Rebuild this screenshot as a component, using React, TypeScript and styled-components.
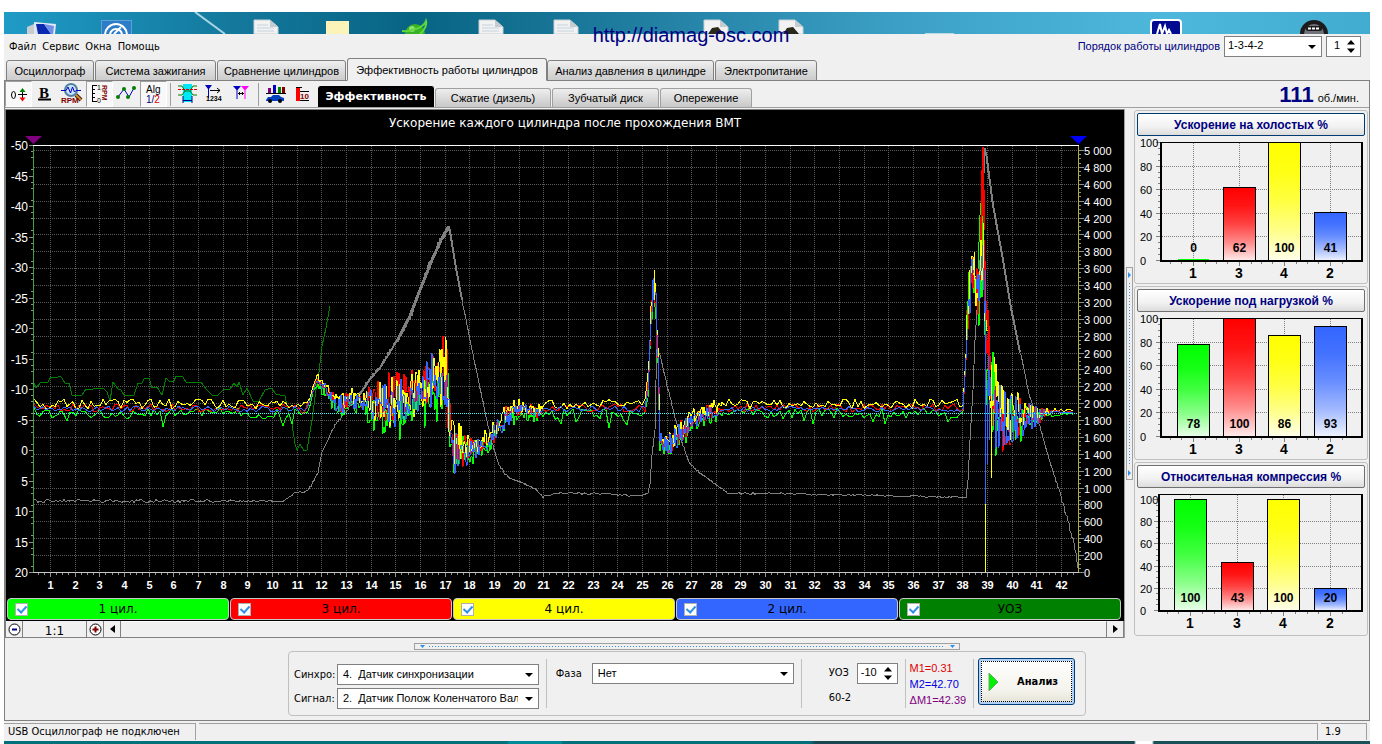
import React from "react";
import styled, { createGlobalStyle } from "styled-components";

const GlobalStyle = createGlobalStyle`
  * { box-sizing: border-box; }
  body {
    margin: 0;
    background: #ffffff;
    color: #000000;
    font-family: "Liberation Sans", Arial, sans-serif;
    font-size: 12px;
    line-height: 14px;
  }
  button, input, select { font: inherit; color: inherit; margin: 0; }
`;

const TAHOMA = `"DejaVu Sans Condensed", Tahoma, sans-serif`;
const VERDANA = `"DejaVu Sans", Verdana, sans-serif`;

const Page = styled.div`
  position: relative;
  padding: 12px 12px 0 4px;
`;

const Desktop = styled.svg`
  display: block;
  width: 100%;
  height: 22px;
`;

const Watermark = styled.a`
  position: absolute;
  top: 24px;
  left: 50%;
  transform: translateX(-50%);
  color: #000080;
  font-size: 20px;
  line-height: 22px;
  text-decoration: none;
`;

const AppWindow = styled.main`
  background: #f0f0f0;
`;

const TopRow = styled.div`
  display: flex;
  justify-content: space-between;
  align-items: center;
  height: 24px;
  padding: 0 9px 0 5px;
`;

const Menu = styled.nav`
  display: flex;
  gap: 6px;
  padding-top: 2px;
`;

const MenuItem = styled.button`
  padding: 0;
  border: 0;
  background: none;
  font-family: ${TAHOMA};
  font-size: 11px;
  line-height: 14px;
`;

const OrderGroup = styled.div`
  display: flex;
  align-items: center;
  gap: 4px;
`;

const OrderLabel = styled.label`
  color: #000080;
  font-size: 11px;
`;

const SelectBox = styled.span<{ $w: number }>`
  position: relative;
  display: block;
  width: ${(p) => p.$w}px;
`;

const NativeSelect = styled.select<{ $pad?: number }>`
  appearance: none;
  display: block;
  width: 100%;
  height: 21px;
  padding: 0 20px 2px ${(p) => p.$pad ?? 5}px;
  border: 1px solid #808080;
  border-radius: 0;
  background: #ffffff;
  font-size: 11px;
  line-height: 16px;
  overflow: hidden;
`;

const SelectArrow = styled.svg`
  position: absolute;
  right: 6px;
  top: 9px;
  width: 8px;
  height: 4px;
  pointer-events: none;
`;

const Spin = styled.span<{ $w: number }>`
  display: flex;
  width: ${(p) => p.$w}px;
  height: 21px;
  border: 1px solid #808080;
  background: #ffffff;
`;

const SpinInput = styled.input`
  flex: 1;
  min-width: 0;
  padding: 0 0 2px;
  border: 0;
  background: none;
  text-align: right;
  font-size: 11px;
`;

const SpinButtons = styled.span`
  display: flex;
  flex-direction: column;
  justify-content: center;
  gap: 3px;
  width: 20px;
  padding-left: 7px;
`;

const SpinButton = styled.button`
  display: block;
  width: 8px;
  height: 5px;
  padding: 0;
  border: 0;
  background: none;
  svg { display: block; }
`;

const MainTabs = styled.div`
  display: grid;
  grid-template-columns: 89px 122px 130px 200px 168px 103px;
  align-items: end;
  height: 23px;
  margin-bottom: -1px;
  padding-left: 2px;
`;

const MainTab = styled.button<{ $active?: boolean }>`
  position: relative;
  height: ${(p) => (p.$active ? 23 : 21)}px;
  margin: 0 ${(p) => (p.$active ? 0 : 1)}px 0 0;
  padding: 0;
  border: 1px solid #808080;
  border-bottom-color: ${(p) => (p.$active ? "#f0f0f0" : "#808080")};
  border-radius: 3px 3px 0 0;
  background: ${(p) => (p.$active ? "#f0f0f0" : "linear-gradient(#f0f0f0, #dcdcdc 50%, #cccccc)")};
  font-size: 11px;
  line-height: 16px;
  white-space: nowrap;
`;

const Frame = styled.section`
  border: 1px solid #808080;
`;

const Toolbar = styled.div`
  display: flex;
  align-items: flex-end;
  height: 27px;
  border-bottom: 1px solid #a0a0a0;
`;

const ToolButton = styled.button<{ $pressed?: boolean }>`
  width: 27px;
  height: 26px;
  padding: 0;
  border: 1px solid;
  border-color: ${(p) => (p.$pressed ? "#a0a0a0 #ffffff #ffffff #a0a0a0" : "transparent")};
  background: ${(p) => (p.$pressed ? "#f8f8f8" : "none")};
  svg { display: block; }
`;

const ToolDivider = styled.span`
  width: 1px;
  height: 23px;
  margin: 0 3px 1px;
  background: #a0a0a0;
`;

const SubTabs = styled.div`
  display: grid;
  grid-template-columns: 117px 117px 108px 93px;
  margin-left: 2px;
`;

const SubTab = styled.button<{ $active?: boolean }>`
  height: ${(p) => (p.$active ? 21 : 19)}px;
  align-self: end;
  margin-right: 1px;
  padding: 0;
  border: 1px solid ${(p) => (p.$active ? "#000000" : "#a0a0a0")};
  border-bottom: 0;
  border-radius: 3px 3px 0 0;
  background: ${(p) => (p.$active ? "#000000" : "linear-gradient(#eeeeee, #c8c8c8)")};
  color: ${(p) => (p.$active ? "#ffffff" : "#000000")};
  font-family: ${(p) => (p.$active ? VERDANA : "inherit")};
  font-size: 11px;
  font-weight: ${(p) => (p.$active ? 700 : 400)};
`;

const Rpm = styled.div`
  display: flex;
  align-items: baseline;
  gap: 4px;
  margin-left: auto;
  padding-right: 10px;
  font-size: 11px;
`;

const RpmValue = styled.strong`
  color: #000080;
  font-size: 22px;
  line-height: 25px;
`;

const Body = styled.div`
  display: flex;
  padding: 1px 1px 0 0;
`;

const ChartPanel = styled.div`
  flex: 1;
  min-width: 0;
  border: 1px solid #808080;
  border-right: 0;
  background: #000000;
`;

const PlotSvg = styled.svg`
  display: block;
  width: 100%;
  height: auto;
`;

const Legend = styled.div`
  display: flex;
  gap: 1px;
  padding: 1px 3px 1px 1px;
`;

const LegendItem = styled.label<{ $color: string }>`
  flex: 1;
  display: flex;
  align-items: center;
  height: 22px;
  padding: 0 7px;
  border: 1px solid #c8c8c8;
  border-radius: 4px;
  background: ${(p) => p.$color};
  font-family: ${VERDANA};
  font-size: 12px;
`;

const LegendCheck = styled.input`
  appearance: none;
  display: flex;
  align-items: center;
  justify-content: center;
  width: 13px;
  height: 13px;
  border: 1px solid #b0b0b0;
  background: #ffffff;
  &:checked::after {
    content: "";
    width: 4px;
    height: 7px;
    margin-bottom: 2px;
    border: solid #2f8fe8;
    border-width: 0 2px 2px 0;
    transform: rotate(42deg);
  }
`;

const LegendText = styled.span`
  flex: 1;
  padding-right: 13px;
  text-align: center;
`;

const ScrollRow = styled.div`
  display: flex;
  height: 16px;
  background: #f0f0f0;
`;

const ScrollButton = styled.button`
  display: flex;
  align-items: center;
  justify-content: center;
  width: 17px;
  padding: 0;
  border: 0;
  border-right: 1px solid #808080;
  background: none;
`;

const ZoomRatio = styled.output`
  width: 64px;
  border-right: 1px solid #808080;
  font-family: ${VERDANA};
  font-size: 12px;
  line-height: 20px;
  text-align: center;
`;

const ScrollTrack = styled.div`
  flex: 1;
  border-top: 1px solid #ffffff;
  border-right: 1px solid #808080;
`;

const VerticalRail = styled.div`
  display: flex;
  justify-content: center;
  align-items: flex-start;
  width: 10px;
  padding: 158px 1px 0 0;
  border-left: 1px solid #a0a0a0;
`;

const RailButton = styled.button`
  display: block;
  padding: 0;
  border: 0;
  background: none;
  svg { display: block; }
`;

const HorizontalRail = styled.div`
  display: flex;
  justify-content: center;
  padding-top: 5px;
`;

const Side = styled.aside`
  display: flex;
  flex-direction: column;
  gap: 2px;
  width: 234px;
  padding-top: 1px;
`;

const Group = styled.section`
  display: flex;
  flex-direction: column;
  gap: 1px;
  height: 174px;
  padding-top: 2px;
  border: 1px solid #c0c0c0;
  border-radius: 3px;
`;

const GroupButton = styled.button<{ $focused?: boolean }>`
  height: 23px;
  margin: 0 2px;
  padding: 0;
  border: 1px solid ${(p) => (p.$focused ? "#003c74" : "#707070")};
  border-radius: 2px;
  background: linear-gradient(#ffffff, #f2f2f2 60%, #dcdcdc);
  color: #000080;
  font-weight: 700;
  font-size: 12px;
`;

const Controls = styled.form`
  display: flex;
  justify-content: center;
  padding: 1px 0 4px;
`;

const ControlsBox = styled.div`
  display: flex;
  align-items: center;
  width: 798px;
  height: 65px;
  padding: 0 10px 0 5px;
  border: 1px solid #c0c0c0;
  border-radius: 4px;
`;

const Sources = styled.div`
  display: grid;
  grid-template-columns: 43px 202px;
  row-gap: 3px;
  align-items: center;
  padding-top: 6px;
`;

const FieldLabel = styled.label`
  font-family: ${TAHOMA};
  font-size: 11px;
`;

const ControlDivider = styled.span`
  width: 1px;
  height: 49px;
  margin: 0 4px 0 7px;
  background: #c0c0c0;
`;

const PhaseField = styled.div`
  display: grid;
  grid-template-columns: 36px 202px;
  align-items: center;
  align-self: flex-start;
  margin-left: 5px;
  padding-top: 11px;
`;

const AngleField = styled.div`
  display: grid;
  grid-template-columns: 28px 41px;
  row-gap: 7px;
  align-items: center;
  margin-left: 23px;
`;

const Markers = styled.div`
  width: 57px;
  white-space: nowrap;
  line-height: 16px;
  font-size: 11px;
`;

const Marker = styled.div<{ $color: string }>`
  color: ${(p) => p.$color};
`;

const AnalyzeButton = styled.button`
  flex: none;
  display: flex;
  align-items: center;
  gap: 18px;
  width: 97px;
  height: 47px;
  margin: 0 0 4px auto;
  padding: 0 0 0 9px;
  border: 1px solid #003c74;
  border-radius: 3px;
  outline: 1px dotted #000000;
  outline-offset: -4px;
  background: linear-gradient(#ffffff, #f4f3ec 70%, #e4e2d4);
  box-shadow: inset 0 0 0 2px #b0d0f8;
  font-family: ${TAHOMA};
  font-weight: 700;
  font-size: 11px;
`;

const StatusBar = styled.footer`
  display: flex;
  height: 20px;
  padding: 2px 0 1px;
  font-family: ${TAHOMA};
  font-size: 11px;
  line-height: 16px;
`;

const StatusCell = styled.div<{ $w?: number }>`
  ${(p) => (p.$w ? `width: ${p.$w}px;` : "flex: 1;")}
  margin-right: 3px;
  padding-left: 4px;
  border: solid #a0a0a0;
  border-width: 1px 1px 0 0;
`;

const Taskbar = styled.div`
  height: 4px;
  background: linear-gradient(
    90deg,
    #00707a 0 504px,
    #008a98 504px 558px,
    #00707a 558px 806px,
    #1a4850 812px 1130px,
    #ffffff 1132px 1148px,
    #1a5058 1150px
  );
`;

/* ---------- data ---------- */

type Pt = [number, number];
type Key = [number, number, number];

const GREEN = "#00ff00";
const RED = "#ff0000";
const YELLOW = "#ffff00";
const BLUE = "#3366ff";

const makeRandom = (seed: number) => {
  let s = seed;
  return () => {
    s = (s * 16807) % 2147483647;
    return s / 2147483647;
  };
};

const toPoints = (pts: Pt[]) => pts.map(([x, y]) => `${x},${Math.round(y * 10) / 10}`).join(" ");

const sample = (keys: Key[], x: number): Pt => {
  for (let i = 1; i < keys.length; i++) {
    const a = keys[i - 1];
    const b = keys[i];
    if (x <= b[0]) {
      const t = (x - a[0]) / (b[0] - a[0]);
      return [a[1] + (b[1] - a[1]) * t, a[2] + (b[2] - a[2]) * t];
    }
  }
  const last = keys[keys.length - 1];
  return [last[1], last[2]];
};

/* x, centre, spread of the four cylinder traces */
const envelope: Key[] = [
  [34, 408, 0], [297, 408, 0], [305, 411, 1], [311, 398, 3], [315, 382, 3], [318, 379, 4], [323, 386, 6],
  [330, 395, 6], [335, 401, 7], [342, 404, 9], [350, 400, 7], [365, 402, 7], [372, 404, 16], [385, 405, 24],
  [398, 403, 22], [408, 399, 18], [418, 394, 22], [428, 386, 24], [440, 380, 30], [446, 378, 34], [448, 395, 30],
  [450, 430, 24], [453, 450, 22], [458, 448, 20], [466, 450, 15], [478, 446, 9], [488, 442, 7], [495, 432, 9],
  [505, 418, 10], [512, 412, 8], [520, 410, 6], [540, 411, 6], [545, 408, 0], [645, 408, 0], [648, 385, 8],
  [650, 340, 10], [652, 300, 14], [654, 285, 14], [656, 305, 14], [658, 360, 18], [660, 440, 8], [668, 444, 10],
  [680, 434, 11], [690, 422, 9], [700, 414, 7], [715, 411, 7], [728, 408, 0], [963, 408, 0], [965, 380, 8],
  [967, 320, 20], [969, 292, 26], [973, 270, 18], [976, 285, 22], [979, 285, 34], [982, 255, 34], [984, 260, 24],
  [986, 340, 55], [988, 370, 56], [990, 390, 50], [993, 402, 48], [997, 416, 36], [1003, 420, 28],
  [1015, 418, 22], [1028, 416, 13], [1040, 415, 7], [1055, 412, 2], [1072, 412, 1],
];

type TraceSpec = { seed: number; offset: number; calm: number; dips?: boolean; lean: number };

const buildTrace = ({ seed, offset, calm, dips, lean }: TraceSpec) => {
  const rnd = makeRandom(seed);
  const pts: Pt[] = [];
  let x = 34;
  while (x <= 1073) {
    const [c, amp] = sample(envelope, x);
    const late = x > 1035;
    const r = rnd() * 2 - 1;
    const noise = amp > 1 ? Math.sign(r) * Math.pow(Math.abs(r), 1.5) * 1.15 * amp : r * (late ? 1 : calm);
    const bias = x > 366 && x < 448 ? lean * amp * 0.4 : 0;
    let y = c + bias + offset * (late ? 0.4 : 1) + noise;
    if (dips && amp < 1 && rnd() < 0.12) y += 4 + rnd() * 9;
    pts.push([x, y]);
    x += amp > 3 ? 1 : 3;
  }
  return toPoints(pts);
};

const traces = [
  { color: GREEN, points: buildTrace({ seed: 71, offset: 5, calm: 5, dips: true, lean: 1 }) },
  { color: RED, points: buildTrace({ seed: 1303, offset: 0, calm: 4, lean: -1 }) },
  { color: YELLOW, points: buildTrace({ seed: 991, offset: -4, calm: 5, lean: 0.3 }) },
  { color: BLUE, points: buildTrace({ seed: 4217, offset: 1, calm: 3, lean: -0.3 }) },
];

const advance: Pt[] = [
  [34, 383], [36, 388], [41, 382], [48, 382], [51, 377], [58, 377], [60, 376], [62, 378], [65, 383], [69, 383],
  [72, 395], [82, 395], [86, 389], [93, 389], [96, 388], [103, 388], [107, 392], [110, 401], [113, 382],
  [118, 389], [121, 390], [124, 395], [134, 395], [138, 383], [142, 383], [144, 379], [149, 378], [152, 388],
  [157, 387], [162, 395], [166, 378], [169, 381], [174, 381], [176, 376], [183, 377], [186, 382], [201, 382],
  [206, 389], [212, 395], [218, 395], [224, 389], [230, 389], [234, 383], [237, 387], [239, 382], [243, 395],
  [247, 388], [253, 401], [259, 401], [265, 390], [271, 388], [276, 394], [280, 395], [285, 396], [288, 411],
  [292, 424], [295, 444], [297, 450], [300, 444], [304, 451], [307, 450], [312, 420], [316, 390], [319, 372],
  [322, 346], [326, 328], [330, 306],
];

const speedKeys: Key[] = [
  [34, 501, 2], [284, 501, 1], [290, 496, 1], [297, 492, 1], [308, 491, 1], [312, 484, 1], [318, 472, 1],
  [322, 452, 0], [328, 440, 1], [335, 425, 1], [345, 413, 1], [358, 396, 1], [370, 378, 2], [380, 367, 2],
  [398, 339, 3], [410, 318, 3], [420, 290, 4], [432, 258, 5], [442, 238, 5], [449, 228, 3], [451, 235, 2],
  [456, 268, 1], [462, 300, 1], [470, 340, 1], [478, 378, 1], [486, 417, 1], [493, 446, 1], [498, 463, 1],
  [505, 474, 1], [511, 479, 1], [525, 484, 1], [535, 489, 1], [543, 497, 1], [560, 493, 1], [600, 494, 1],
  [640, 496, 1], [648, 493, 0], [650, 484, 0], [652, 455, 0], [655, 430, 0], [656, 380, 0], [657, 350, 0],
  [660, 355, 0], [667, 385, 1], [675, 417, 1], [682, 443, 1], [690, 464, 1], [700, 473, 1], [715, 484, 1],
  [728, 493, 1], [800, 494, 1], [900, 496, 1], [960, 497, 1], [966, 498, 0], [968, 480, 0], [970, 440, 0],
  [973, 390, 0], [975, 340, 0], [977, 310, 0], [979, 280, 0], [981, 240, 0], [983, 200, 0], [985, 148, 0],
  [987, 160, 6], [993, 205, 4], [1003, 260, 3], [1011, 308, 3], [1020, 352, 2], [1030, 398, 1],
  [1040, 427, 1], [1050, 462, 1], [1060, 493, 1], [1066, 515, 3], [1075, 548, 3], [1078, 568, 1],
];

const speedTrace = (() => {
  const rnd = makeRandom(557);
  const pts: Pt[] = [];
  for (let x = 34; x <= 1078; x += x < 310 || (x > 543 && x < 640) || (x > 728 && x < 960) ? 2 : 1) {
    const [c, amp] = sample(speedKeys, x);
    pts.push([x, c + (rnd() * 2 - 1) * amp]);
  }
  return toPoints(pts);
})();

const legend = [
  { label: "1 цил.", color: GREEN },
  { label: "3 цил.", color: RED },
  { label: "4 цил.", color: YELLOW },
  { label: "2 цил.", color: BLUE },
  { label: "УОЗ", color: "#008000" },
];

const range = (n: number) => Array.from({ length: n }, (_, i) => i);

/* ---------- charts ---------- */

const AXIS_FONT = "Liberation Sans, Arial, sans-serif";

const MainPlot = () => {
  const xAt = (v: number) => Math.round(50 + (v - 1) * 24.66) + 0.5;
  const leftAt = (v: number) => Math.round(145 + (v + 50) * 6.1) + 0.5;
  const rightAt = (v: number) => Math.round(572 - v * 0.0844) + 0.5;
  return (
    <PlotSvg viewBox="6 110 1118 487" role="img" aria-label="Ускорение каждого цилиндра после прохождения ВМТ">
      <text x="565" y="127" fill="#fff" fontSize="12" fontFamily="DejaVu Sans, Verdana, sans-serif" textAnchor="middle">
        Ускорение каждого цилиндра после прохождения ВМТ
      </text>
      <g stroke="#5a5a5a" strokeDasharray="1 1">
        {range(42).map((i) => (
          <line key={i} x1={xAt(i + 1)} x2={xAt(i + 1)} y1="146" y2="572" />
        ))}
        {range(25).map((i) => (
          <line key={i} x1="34" x2="1078" y1={rightAt((i + 1) * 200)} y2={rightAt((i + 1) * 200)} />
        ))}
      </g>
      <g stroke="#909090">
        {range(71)
          .filter((i) => i % 5 !== 3)
          .map((i) => (
            <line key={i} x1={i % 5 ? 31 : 29} x2="33" y1={leftAt(i - 50)} y2={leftAt(i - 50)} />
          ))}
        {range(101).map((i) => (
          <line key={i} x1="1079" x2={i % 4 ? 1081 : 1084} y1={rightAt(i * 50)} y2={rightAt(i * 50)} />
        ))}
        {range(169).map((i) => {
          const v = 0.5 + i * 0.25;
          return <line key={i} x1={xAt(v)} x2={xAt(v)} y1="573" y2={Number.isInteger(v) ? 577 : 575} />;
        })}
      </g>
      <g fill="#fff" fontFamily={AXIS_FONT} fontSize="11">
        {range(15).map((i) => (
          <text key={i} x="28" y={leftAt(i * 5 - 50) + 4} textAnchor="end" fontSize="12">
            {i * 5 - 50}
          </text>
        ))}
        {range(26).map((i) => (
          <text key={i} x="1084" y={rightAt(i * 200) + 4}>
            {String(i * 200).replace(/(\d)(\d{3})$/, "$1 $2")}
          </text>
        ))}
      </g>
      <g fill="#fff" fontFamily={AXIS_FONT} fontSize="11" fontWeight="700" textAnchor="middle">
        {range(42).map((i) => (
          <text key={i} x={xAt(i + 1)} y="589">
            {i + 1}
          </text>
        ))}
      </g>
      <g fill="none" shapeRendering="crispEdges">
        <polyline points={toPoints(advance)} stroke="#008000" />
        <polyline points={speedTrace} stroke="#808080" />
        <polyline points="358,397 370,379 380,368 398,339" stroke="#808080" strokeWidth="2" />
        <polyline points="398,339 410,316 420,290 432,260 442,238 449,226" stroke="#808080" strokeWidth="3" />
        <polyline points="449,226 456,268 462,300" stroke="#808080" strokeWidth="2" />
        <polyline points="986,152 993,205 1003,260 1011,308 1020,352" stroke="#808080" strokeWidth="2" />
        {traces.map((t) => (
          <polyline key={t.color} points={t.points} stroke={t.color} />
        ))}
        <path d="M967 330 L969 272 M978 270 L980 215 L982 192 L983 260 M993 352 V400 M992 395 L993 352 L995 390" stroke={GREEN} />
        <path d="M981 240 L983 147 L984 230 M984 240 L986 320 M988 310 L990 370" stroke={RED} strokeWidth="2" />
        <path d="M445.500 380 V337 M654.500 300 V270 M974.500 252 V280 M984 285 L983 222 M991.500 365 V478 M985.500 504 V572" stroke={YELLOW} />
        <path d="M982 245 L984 290 M653 300 V278 M985.500 270 V504 M987.500 380 V464 M989.500 400 V440" stroke={BLUE} />
        <line x1="34" x2="1078" y1="413.5" y2="413.5" stroke="#40ffff" strokeDasharray="1 1" />
        <line x1="33" x2="1079" y1="145.5" y2="145.5" stroke="#fff" />
        <line x1="33" x2="1079" y1="572.5" y2="572.5" stroke="#c8c8c8" />
        <line x1="33.5" x2="33.5" y1="146" y2="572" stroke="#40a040" />
        <line x1="1078.5" x2="1078.5" y1="146" y2="572" stroke="#b0b030" />
      </g>
      <polygon points="25,136 42,136 33.5,144" fill="#800080" />
      <polygon points="1070,136 1087,136 1078.5,144" fill="#0000ff" />
    </PlotSvg>
  );
};

type BarPlotProps = { id: string; values: number[]; top: number; bottom: number; left: number; centers: number[] };

const barNames = ["1", "3", "4", "2"];
const barColors = [GREEN, RED, YELLOW, BLUE];

const BarPlot = ({ id, values, top, bottom, left, centers }: BarPlotProps) => {
  const yAt = (v: number) => Math.round(bottom - ((bottom - top) * v) / 100) + 0.5;
  return (
    <PlotSvg viewBox="0 0 232 145" role="img" aria-label={values.join(", ")}>
      <defs>
        {barColors.map((c, i) => (
          <linearGradient key={c} id={`${id}-${i}`} x1="0" y1="0" x2="0" y2="1">
            <stop offset="0" stopColor={c} />
            <stop offset="0.25" stopColor={c} stopOpacity="0.92" />
            <stop offset="0.5" stopColor={c} stopOpacity="0.74" />
            <stop offset="0.75" stopColor={c} stopOpacity="0.46" />
            <stop offset="1" stopColor={c} stopOpacity="0.08" />
          </linearGradient>
        ))}
      </defs>
      <g stroke="#808080" shapeRendering="crispEdges">
        <g strokeDasharray="1 1">
          {[20, 40, 60, 80].map((v) => (
            <line key={v} x1={left} x2="227" y1={yAt(v)} y2={yAt(v)} />
          ))}
          {centers.map((c) => (
            <line key={c} x1={c + 0.5} x2={c + 0.5} y1="6" y2={bottom} />
          ))}
        </g>
        {range(21).map((i) => (
          <line key={i} x1={left - (i % 4 ? 2 : 4)} x2={left} y1={yAt(i * 5)} y2={yAt(i * 5)} />
        ))}
        {centers.map((c) => (
          <path key={c} d={`M${c + 0.5} ${bottom + 1}v5M${c - 11.5} ${bottom + 1}v3M${c + 12.5} ${bottom + 1}v3M${c - 22.5} ${bottom + 1}v3`} />
        ))}
      </g>
      <path d={`M${left} 5.500H228`} stroke="#000" fill="none" />
      <path d={`M${left + 1} 5V${bottom + 1}H227V5`} stroke="#000" strokeWidth="2" fill="none" />
      {values.map((v, i) =>
        v > 0 ? (
          <g key={i}>
            <rect x={centers[i] - 15.5} y={yAt(v)} width="32" height={bottom + 0.5 - yAt(v)} fill="#fff" />
            <rect x={centers[i] - 15.5} y={yAt(v)} width="32" height={bottom + 0.5 - yAt(v)} fill={`url(#${id}-${i})`} stroke="#000" />
          </g>
        ) : (
          <rect key={i} x={centers[i] - 15} y={bottom - 1} width="31" height="1" fill={barColors[i]} />
        )
      )}
      <g fontFamily={AXIS_FONT} fontSize="12" fontWeight="700" textAnchor="middle">
        {values.map((v, i) => (
          <text key={i} x={centers[i] + 0.5} y={bottom - 8}>
            {v}
          </text>
        ))}
      </g>
      <g fontFamily={AXIS_FONT} fontSize="14" fontWeight="700" textAnchor="middle">
        {barNames.map((n, i) => (
          <text key={n} x={centers[i]} y={bottom + 18}>
            {n}
          </text>
        ))}
      </g>
      <g fontFamily={AXIS_FONT} fontSize="11">
        {[0, 20, 40, 60, 80, 100].map((v) => (
          <text key={v} x="5" y={yAt(v) + 4}>
            {v}
          </text>
        ))}
      </g>
    </PlotSvg>
  );
};

/* ---------- small pieces ---------- */

const Down = () => (
  <SelectArrow viewBox="0 0 8 4">
    <path d="M0 0H8L4 4Z" fill="#000" />
  </SelectArrow>
);

const Select = ({ id, w, value, pad }: { id: string; w: number; value: string; pad?: number }) => (
  <SelectBox $w={w}>
    <NativeSelect id={id} $pad={pad} defaultValue={value}>
      <option>{value}</option>
    </NativeSelect>
    <Down />
  </SelectBox>
);

const Spinner = ({ id, w, value, label }: { id?: string; w: number; value: string; label: string }) => (
  <Spin $w={w}>
    <SpinInput id={id} aria-label={label} defaultValue={value} />
    <SpinButtons>
      <SpinButton type="button" aria-label="Больше">
        <svg width="8" height="5"><path d="M4 0L8 4.500H0Z" /></svg>
      </SpinButton>
      <SpinButton type="button" aria-label="Меньше">
        <svg width="8" height="5"><path d="M4 5L8 .5H0Z" /></svg>
      </SpinButton>
    </SpinButtons>
  </Spin>
);

const Icon = ({ children }: { children: React.ReactNode }) => (
  <svg width="25" height="24" viewBox="0 0 25 24" fill="none" fontFamily="Liberation Sans, Arial, sans-serif">
    {children}
  </svg>
);

const leftTools = [
  {
    name: "Смещение",
    pressed: true,
    icon: (
      <>
        <ellipse cx="7.500" cy="13" rx="2" ry="3.500" stroke="#000" />
        <path d="M12 12.500H21M16.500 8V18" stroke="#000" />
        <path d="M13.500 10L16.500 6L19.500 10Z" fill="#008000" />
        <path d="M13.500 15.500H19.500L16.500 19.500Z" fill="#f00" />
      </>
    ),
  },
  {
    name: "Жирный",
    pressed: false,
    icon: (
      <>
        <text x="6" y="16" fontFamily="Liberation Serif, serif" fontSize="15" fontWeight="700" fill="#000">B</text>
        <path d="M5 17.500H18" stroke="#000" strokeWidth="2" />
      </>
    ),
  },
  {
    name: "Обороты",
    pressed: false,
    icon: (
      <>
        <path d="M16 13L21 18" stroke="#402810" strokeWidth="4" />
        <path d="M16 13L21 18" stroke="#d08828" strokeWidth="2" />
        <circle cx="11" cy="8" r="6" fill="#c8e4ff" stroke="#5080a0" strokeWidth="2" />
        <path d="M1 8.500H6L8 5L10.500 11L12.500 5L14.500 10L16 8.500H21" stroke="#0000c0" />
        <text x="1" y="21" fontSize="8" fontWeight="700" fill="#800000">RPM</text>
      </>
    ),
  },
  {
    name: "Шкала оборотов",
    pressed: true,
    icon: (
      <>
        <path d="M5 3.500H10M5.500 3V20M5 19.500H10M5 7.500H8M5 11.500H8M5 15.500H8" stroke="#000" />
        <text x="10" y="8" fontSize="7" fill="#000">1</text>
        <text x="10" y="21" fontSize="7" fill="#000">0</text>
        <text transform="translate(15 3) rotate(90)" fontSize="7" fontWeight="700" fill="#800000">RPM</text>
      </>
    ),
  },
  {
    name: "Точки",
    pressed: false,
    icon: (
      <>
        <path d="M4 15L10 7L15 15L20 6" stroke="#0000c0" />
        <g fill="#008000">
          <circle cx="4" cy="15" r="2" /><circle cx="10" cy="7" r="2" /><circle cx="14" cy="15" r="2" /><circle cx="20" cy="6" r="2" />
        </g>
      </>
    ),
  },
  {
    name: "Алгоритм",
    pressed: true,
    icon: (
      <>
        <text x="5" y="11" fontSize="10" fill="#000">Alg</text>
        <text x="5" y="21" fontSize="10" fill="#000080">1/<tspan fill="#e00000">2</tspan></text>
      </>
    ),
  },
];

const midTools = [
  {
    name: "Цилиндр",
    icon: (
      <>
        <path d="M8 2H17V20H8Z" fill="#00e8f8" />
        <path d="M3 4H7L10 9H15L18 4H22M3 13H7L10 9M15 9L18 13H22" stroke="#008000" />
        <path d="M3 7.500H22" stroke="#e00000" strokeDasharray="3 1" />
        <path d="M8 14V21M17 14V21M8 18.500H17" stroke="#000080" />
      </>
    ),
  },
  {
    name: "Метки 1234",
    icon: (
      <>
        <path d="M3 3H10L7 7V16H6V7Z" fill="#0000c0" />
        <path d="M8 8.500H18M15 6L18 8.500L15 11" stroke="#000" />
        <text x="4" y="19" fontSize="7" fontWeight="700" fill="#000">1234</text>
      </>
    ),
  },
  {
    name: "Между метками",
    icon: (
      <>
        <path d="M4 4H12L8.500 8V17H7.500V8Z" fill="#0000c0" />
        <path d="M12 4H20L16.500 8V17H15.500V8Z" fill="#f0f" />
        <path d="M9 11.500H15M10.500 10V13M13.500 10V13" stroke="#000" />
      </>
    ),
  },
];

const rightTools = [
  {
    name: "Гистограмма",
    icon: (
      <>
        <path d="M5 6H8V11H5Z" fill="#800080" /><path d="M10 3H13V11H10Z" fill="#0000c0" />
        <path d="M15 5H18V11H15Z" fill="#008000" /><path d="M19 5H22V11H19Z" fill="#800000" />
        <path d="M3 11.500H23" stroke="#000" />
        <path d="M3 18L5 15H8L10 13H16L18 15L21 16V19H3Z" fill="#0040c0" />
        <circle cx="7" cy="19" r="2" fill="#000" /><circle cx="17" cy="19" r="2" fill="#000" />
      </>
    ),
  },
  {
    name: "Десять",
    icon: (
      <>
        <path d="M6 6H10V19H6Z" fill="#f00" />
        <path d="M6 5.500H12M10 9.500H19M10 18.500H19" stroke="#000" />
        <text x="10" y="17" fontSize="8" fontWeight="700" fill="#800000">10</text>
      </>
    ),
  },
];

const mainTabs = [
  "Осциллограф",
  "Система зажигания",
  "Сравнение цилиндров",
  "Эффективность работы цилиндров",
  "Анализ давления в цилиндре",
  "Электропитание",
];

const sideCharts = [
  { title: "Ускорение на холостых %", values: [0, 62, 100, 41], top: 5, bottom: 123, left: 25, centers: [58, 104, 149, 195] },
  { title: "Ускорение под нагрузкой %", values: [78, 100, 86, 93], top: 5, bottom: 123, left: 25, centers: [58, 104, 149, 195] },
  { title: "Относительная компрессия %", values: [100, 43, 100, 20], top: 10, bottom: 121, left: 23, centers: [55, 102, 148, 195] },
];

const Sheet = ({ x, car }: { x: number; car?: boolean }) => (
  <g transform={`translate(${x} 8)`}>
    <path d="M0 0H16L24 7V14H0Z" fill="#f2f2f2" stroke="#c8d0d4" />
    <path d="M16 0V7H24Z" fill="#c4ccd0" />
    {car ? <path d="M4 14L8 8L14 7L20 14Z" fill="#28281c" /> : <path d="M3 5H14M3 8H20M3 11H20" stroke="#c4d4e0" />}
  </g>
);

const DesktopStrip = () => (
  <Desktop viewBox="0 0 1366 22" preserveAspectRatio="xMinYMin slice" aria-hidden="true">
    <defs>
      <linearGradient id="sky">
        <stop offset="0" stopColor="#1e9bc6" />
        <stop offset="0.16" stopColor="#147a9e" />
        <stop offset="0.3" stopColor="#086484" />
        <stop offset="0.45" stopColor="#1e7c9e" />
        <stop offset="0.67" stopColor="#3ea2c8" />
        <stop offset="0.85" stopColor="#4eb8dc" />
        <stop offset="1" stopColor="#42acd0" />
      </linearGradient>
    </defs>
    <rect width="1366" height="22" fill="url(#sky)" />
    <path d="M191 0L221 22" stroke="#a8d4e4" strokeWidth="2" />
    <path d="M23 15L30 12V22H23Z" fill="#c8ccd0" />
    <path d="M30 10L52 12L51 22H30Z" fill="#e0e8f4" />
    <path d="M32 12L40 12L47 22H34Z" fill="#0a28b0" />
    <path d="M40 12L50 14L49 22H47Z" fill="#7090e8" />
    <rect x="97.500" y="8.500" width="30" height="15" fill="#2c7cc8" stroke="#5ea0d8" />
    <circle cx="112" cy="23" r="11" fill="none" stroke="#fff" strokeWidth="2" />
    <circle cx="112" cy="23" r="6" fill="none" stroke="#fff" strokeWidth="2" />
    <path d="M110 22L117 15" stroke="#fff" strokeWidth="2" />
    <Sheet x={250} />
    <rect x="322" y="9" width="23" height="14" fill="#fbf3b8" />
    <circle cx="411" cy="22" r="10" fill="#38b028" />
    <circle cx="408" cy="17" r="3" fill="#90e070" />
    <path d="M398 19C408 20 420 15 422 9C423 12 421 18 416 22" fill="none" stroke="#60d838" strokeWidth="2" />
    <Sheet x={475} />
    <Sheet x={550} />
    <Sheet x={700} car />
    <Sheet x={775} car />
    <path d="M921 21.500H950" stroke="#b8d8e4" />
    <rect x="1147" y="8" width="30" height="18" rx="3" fill="#000a90" stroke="#fff" strokeWidth="2" />
    <path d="M1153 22L1156 12L1158 22L1161 14L1163 22L1165 18L1167 22" stroke="#fff" strokeWidth="2" fill="none" />
    <circle cx="1310" cy="22" r="12" fill="#707478" stroke="#1c1c1c" strokeWidth="4" />
    <rect x="1302" y="14" width="16" height="5" rx="2" fill="#1c1c1c" />
    <path d="M1304 16.500H1316" stroke="#fff" strokeWidth="2" strokeDasharray="3 1" />
  </Desktop>
);

const tools = (list: { name: string; pressed?: boolean; icon: React.ReactNode }[]) =>
  list.map((t) => (
    <ToolButton key={t.name} type="button" aria-label={t.name} $pressed={t.pressed}>
      <Icon>{t.icon}</Icon>
    </ToolButton>
  ));

export default function App() {
  return (
    <Page>
      <GlobalStyle />
      <DesktopStrip />
      <Watermark href="http://diamag-osc.com">http://diamag-osc.com</Watermark>
      <AppWindow>
        <TopRow>
          <Menu>
            {["Файл", "Сервис", "Окна", "Помощь"].map((m) => (
              <MenuItem key={m} type="button">{m}</MenuItem>
            ))}
          </Menu>
          <OrderGroup>
            <OrderLabel htmlFor="order">Порядок работы цилиндров</OrderLabel>
            <Select id="order" w={98} value="1-3-4-2" pad={3} />
            <Spinner w={35} value="1" label="Номер цилиндра" />
          </OrderGroup>
        </TopRow>
        <MainTabs role="tablist">
          {mainTabs.map((t, i) => (
            <MainTab key={t} type="button" role="tab" aria-selected={i === 3} $active={i === 3}>{t}</MainTab>
          ))}
        </MainTabs>
        <Frame>
          <Toolbar>
            {tools(leftTools)}
            <ToolDivider />
            {tools(midTools)}
            <ToolDivider />
            {tools(rightTools)}
            <SubTabs role="tablist">
              {["Эффективность", "Сжатие (дизель)", "Зубчатый диск", "Опережение"].map((t, i) => (
                <SubTab key={t} type="button" role="tab" aria-selected={i === 0} $active={i === 0}>{t}</SubTab>
              ))}
            </SubTabs>
            <Rpm>
              <RpmValue>111</RpmValue>об./мин.
            </Rpm>
          </Toolbar>
          <Body>
            <ChartPanel>
              <MainPlot />
              <Legend>
                {legend.map((l) => (
                  <LegendItem key={l.label} $color={l.color}>
                    <LegendCheck type="checkbox" defaultChecked />
                    <LegendText>{l.label}</LegendText>
                  </LegendItem>
                ))}
              </Legend>
              <ScrollRow>
                <ScrollButton type="button" aria-label="Уменьшить">
                  <svg width="13" height="13"><circle cx="6.500" cy="6.500" r="5.500" fill="#fff" stroke="#000" /><path d="M4 6.500H9" stroke="#000080" strokeWidth="2" /></svg>
                </ScrollButton>
                <ZoomRatio>1:1</ZoomRatio>
                <ScrollButton type="button" aria-label="Увеличить">
                  <svg width="13" height="13"><circle cx="6.500" cy="6.500" r="5.500" fill="#fff" stroke="#000" /><path d="M3.500 6.500H9.500M6.500 3.500V9.500" stroke="#800000" strokeWidth="2" /></svg>
                </ScrollButton>
                <ScrollButton type="button" aria-label="Влево">
                  <svg width="5" height="8"><path d="M5 0V8L0 4Z" /></svg>
                </ScrollButton>
                <ScrollTrack />
                <ScrollButton type="button" aria-label="Вправо">
                  <svg width="5" height="8"><path d="M0 0V8L5 4Z" /></svg>
                </ScrollButton>
              </ScrollRow>
            </ChartPanel>
            <VerticalRail>
              <RailButton type="button" aria-label="Свернуть диаграммы">
                <svg width="7" height="213" fill="none">
                  <rect x=".5" y=".5" width="6" height="212" stroke="#a0a0a0" />
                  <path d="M3.500 16V198" stroke="#2f8fe8" strokeDasharray="1 2" />
                  <path d="M2 5L5 8L2 11ZM2 203L5 206L2 209Z" fill="#2f8fe8" />
                </svg>
              </RailButton>
            </VerticalRail>
            <Side>
              {sideCharts.map((c, i) => (
                <Group key={c.title}>
                  <GroupButton type="button" $focused={i === 0}>{c.title}</GroupButton>
                  <BarPlot id={`bars${i}`} {...c} />
                </Group>
              ))}
            </Side>
          </Body>
          <HorizontalRail>
            <RailButton type="button" aria-label="Свернуть настройки">
              <svg width="546" height="7" fill="none">
                <rect x=".5" y=".5" width="545" height="6" stroke="#a0a0a0" />
                <path d="M15 3.500H530" stroke="#2f8fe8" strokeDasharray="1 2" />
                <path d="M6 2H11L8.500 5ZM536 2H541L538.500 5Z" fill="#2f8fe8" />
              </svg>
            </RailButton>
          </HorizontalRail>
          <Controls>
            <ControlsBox>
              <Sources>
                <FieldLabel htmlFor="sync">Синхро:</FieldLabel>
                <Select id="sync" w={202} value={"4.\u00a0 Датчик синхронизации"} />
                <FieldLabel htmlFor="signal">Сигнал:</FieldLabel>
                <Select id="signal" w={202} value={"2.\u00a0 Датчик Полож Коленчатого Вала"} />
              </Sources>
              <ControlDivider />
              <PhaseField>
                <FieldLabel htmlFor="phase">Фаза</FieldLabel>
                <Select id="phase" w={202} value="Нет" />
              </PhaseField>
              <ControlDivider />
              <AngleField>
                <FieldLabel htmlFor="angle">УОЗ</FieldLabel>
                <Spinner id="angle" w={41} value="-10" label="УОЗ" />
                <FieldLabel as="span">60-2</FieldLabel>
              </AngleField>
              <ControlDivider />
              <Markers>
                <Marker $color="#e00000">M1=0.31</Marker>
                <Marker $color="#0000e0">M2=42.70</Marker>
                <Marker $color="#800080">ΔM1=42.39</Marker>
              </Markers>
              <ControlDivider />
              <AnalyzeButton type="button">
                <svg width="11" height="20"><path d="M1 1L10 10L1 19Z" fill="#00f000" stroke="#60b060" /></svg>
                Анализ
              </AnalyzeButton>
            </ControlsBox>
          </Controls>
        </Frame>
        <StatusBar>
          <StatusCell $w={192}>USB Осциллограф не подключен</StatusCell>
          <StatusCell>{""}</StatusCell>
          <StatusCell $w={46}>1.9</StatusCell>
        </StatusBar>
      </AppWindow>
      <Taskbar />
    </Page>
  );
}
